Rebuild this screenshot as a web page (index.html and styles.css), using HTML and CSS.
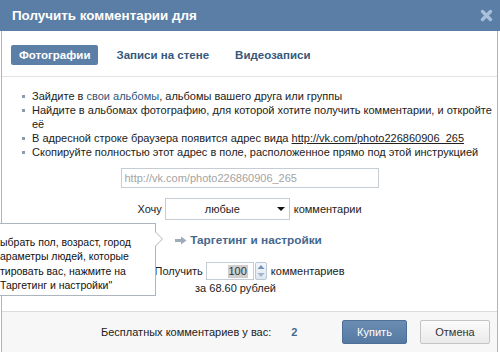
FILE: index.html
```html
<!DOCTYPE html>
<html lang="ru">
<head>
<meta charset="utf-8">
<title>Получить комментарии</title>
<link rel="stylesheet" href="styles.css">
</head>
<body>
<div class="dialog">
  <div class="header">
    <span class="title">Получить комментарии для</span>
    <svg class="close" width="13" height="13" viewBox="0 0 13 13"><path d="M2.5 2.5 L10.5 10.5 M10.5 2.5 L2.5 10.5" stroke="#a9c0da" stroke-width="3.4" stroke-linecap="round"/></svg>
  </div>
  <div class="main">
    <div class="tabs">
      <span class="tab active">Фотографии</span>
      <span class="tab">Записи на стене</span>
      <span class="tab">Видеозаписи</span>
    </div>
    <div class="body">
      <ul class="steps">
        <li>Зайдите в <span class="link">свои альбомы</span>, альбомы вашего друга или группы</li>
        <li>Найдите в альбомах фотографию, для которой хотите получить комментарии, и откройте<br>её</li>
        <li>В адресной строке браузера появится адрес вида <span class="ulink">http://vk.com/photo226860906_265</span></li>
        <li>Скопируйте полностью этот адрес в поле, расположенное прямо под этой инструкцией</li>
      </ul>
      <div class="form">
        <div class="url">http://vk.com/photo226860906_265</div>
        <div class="row want">
          <span>Хочу</span>
          <div class="select"><span class="sel-text">любые</span><span class="caret"></span></div>
          <span>комментарии</span>
        </div>
        <div class="row target">
          <svg class="arrow" width="12" height="9" viewBox="0 0 12 9"><path d="M0 3 H6 V0.5 L11.5 4.5 L6 8.5 V6 H0 Z" fill="#9eabb9"/></svg>
          <span class="target-link">Таргетинг и настройки</span>
        </div>
        <div class="row count">
          <span>Получить</span>
          <div class="num"><span class="num-val">100</span></div>
          <div class="spin">
            <svg width="12" height="18" viewBox="0 0 12 18"><path d="M2.5 7 L6 3 L9.5 7 Z" fill="#6f93bb"/><path d="M2.5 11 L6 15 L9.5 11 Z" fill="#9fb6cf"/></svg>
          </div>
          <span>комментариев</span>
        </div>
        <div class="price">за 68.60 рублей</div>
      </div>
    </div>
    <div class="footer">
      <span class="free">Бесплатных комментариев у вас:</span>
      <span class="free-num">2</span>
      <div class="buttons">
        <span class="btn primary">Купить</span>
        <span class="btn">Отмена</span>
      </div>
    </div>
  </div>
</div>
<div class="tooltip">
  <div class="tip-text">ыбрать пол, возраст, город<br>араметры людей, которые<br>тировать вас, нажмите на<br>Таргетинг и настройки"</div>
</div>
</body>
</html>
```
FILE: styles.css
```css
html, body {
  margin: 0;
  padding: 0;
}
body {
  width: 500px;
  height: 352px;
  overflow: hidden;
  position: relative;
  background: #fff;
  font-family: "Liberation Sans", Arial, sans-serif;
  font-size: 11px;
  color: #000;
}
.dialog {
  width: 500px;
  height: 352px;
  display: flex;
  flex-direction: column;
}
.header {
  height: 31px;
  flex: none;
  background: #5a7ea6;
  display: flex;
  align-items: center;
  justify-content: space-between;
  padding: 0 7px 0 12px;
  box-sizing: border-box;
}
.title {
  color: #fff;
  font-weight: bold;
  font-size: 13.4px;
}
.close {
  display: block;
}
.main {
  flex: 1;
  margin: 0 2px 0 1px;
  border-left: 1px solid #b4b4b4;
  border-right: 1px solid #b4b4b4;
  display: flex;
  flex-direction: column;
}
.tabs {
  height: 46px;
  box-sizing: border-box;
  padding: 14px 0 0 9px;
  border-bottom: 1px solid #dfe3e8;
  display: flex;
  gap: 10px;
  align-items: flex-start;
}
.tab {
  height: 20px;
  line-height: 20px;
  padding: 0 8px;
  font-weight: bold;
  font-size: 11.5px;
  color: #36587c;
  border-radius: 2px;
}
.tab.active {
  background: #5b7fa7;
  color: #fff;
}
.body {
  flex: 1;
  padding-top: 12px;
}
.steps {
  list-style: none;
  margin: 0;
  padding: 0 0 0 30px;
  color: #222;
  font-size: 11px;
}
.steps li {
  line-height: 14px;
  white-space: nowrap;
  position: relative;
}
.steps li::before {
  content: "";
  position: absolute;
  left: -10px;
  top: 6px;
  width: 3px;
  height: 3px;
  background: #8c9bad;
}
.link {
  color: #2b587a;
}
.ulink {
  text-decoration: underline;
  color: #222;
}
.form {
  display: flex;
  flex-direction: column;
  align-items: center;
  margin-top: 9px;
}
.url {
  width: 258px;
  height: 20px;
  box-sizing: border-box;
  border: 1px solid #c5ccd4;
  color: #a3a3a3;
  line-height: 18px;
  padding-left: 3px;
}
.row {
  display: flex;
  align-items: center;
  color: #222;
}
.want {
  margin-top: 10px;
  gap: 3px;
}
.select {
  width: 125px;
  height: 22px;
  box-sizing: border-box;
  border: 1px solid #c5ccd4;
  display: flex;
  align-items: center;
  justify-content: space-between;
  padding: 0 4px 0 0;
  margin-right: 1px;
}
.sel-text {
  flex: 1;
  text-align: center;
  padding-left: 2px;
}
.caret {
  width: 0;
  height: 0;
  border-left: 4px solid transparent;
  border-right: 4px solid transparent;
  border-top: 4px solid #111;
}
.target {
  margin-top: 13px;
  gap: 3px;
  height: 14px;
  margin-right: 2px;
}
.arrow {
  display: block;
}
.target-link {
  font-weight: bold;
  color: #45688e;
  font-size: 11.8px;
}
.count {
  margin-top: 15px;
}
.num {
  width: 48px;
  height: 18px;
  box-sizing: border-box;
  border: 1px solid #c5ccd4;
  margin-left: 3px;
  display: flex;
  align-items: center;
  justify-content: flex-end;
  padding-right: 5px;
}
.num-val {
  background: #cfcfcf;
  color: #333;
  line-height: 13px;
  padding: 0 1px;
}
.spin {
  width: 12px;
  height: 18px;
  margin: 0 4px 0 1px;
  box-sizing: border-box;
  border: 1px solid #b9c7d6;
  border-radius: 2px;
  background: linear-gradient(#f4f7fa, #dfe6ee);
  display: flex;
  align-items: center;
  justify-content: center;
  overflow: hidden;
}
.spin svg {
  display: block;
  flex: none;
}
.price {
  margin-top: 1px;
  line-height: 14px;
  margin-right: 28px;
  color: #222;
}
.footer {
  height: 41px;
  box-sizing: border-box;
  border-top: 1px solid #dcdcdc;
  background: #f7f7f7;
  display: flex;
  align-items: center;
  padding: 0 7px 0 99px;
  color: #222;
}
.free-num {
  margin-left: 20px;
  font-weight: bold;
  color: #45688e;
}
.buttons {
  margin-left: auto;
  display: flex;
  gap: 13px;
}
.btn {
  height: 24px;
  line-height: 22px;
  box-sizing: border-box;
  text-align: center;
  width: 70px;
  border: 1px solid #c4c4c4;
  border-radius: 2px;
  background: linear-gradient(#fbfbfb, #eaeaea);
  color: #333;
}
.btn.primary {
  width: 65px;
  background: linear-gradient(#6b8db4, #5579a2);
  border-color: #4d7099;
  color: #fff;
}
.tooltip {
  position: absolute;
  left: -12px;
  top: 223px;
  width: 168px;
  height: 73px;
  box-sizing: border-box;
  border: 1px solid #adb5bf;
  background: #fff;
  padding: 11px 0 0 11px;
}
.tooltip::before,
.tooltip::after {
  content: "";
  position: absolute;
  top: 7px;
  width: 0;
  height: 0;
  border-top: 8px solid transparent;
  border-bottom: 8px solid transparent;
}
.tooltip::before {
  right: -8px;
  border-left: 8px solid #adb5bf;
}
.tooltip::after {
  right: -7px;
  border-left: 8px solid #fff;
}
.tip-text {
  font-size: 10.5px;
  line-height: 14.3px;
  color: #111;
  white-space: nowrap;
}
```
